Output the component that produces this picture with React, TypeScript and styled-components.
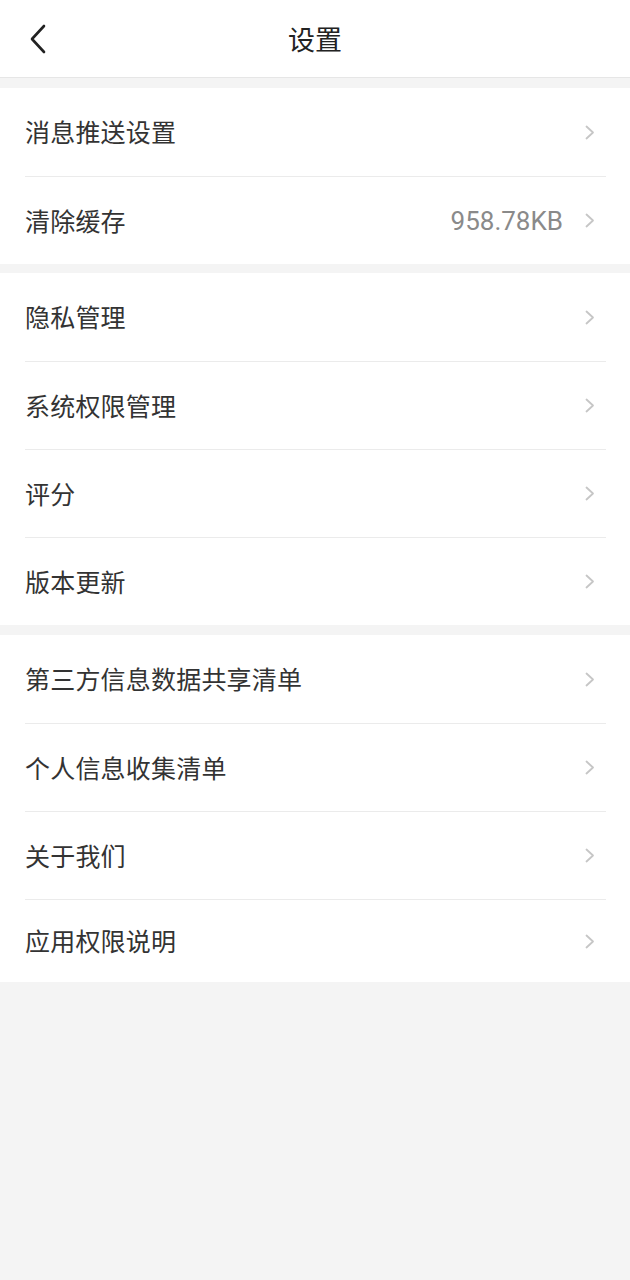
import React from "react";
import styled, { createGlobalStyle } from "styled-components";

const GlobalStyle = createGlobalStyle`
  html, body {
    margin: 0;
    padding: 0;
    background: #f4f4f4;
  }
  body {
    font-family: "Roboto", "Noto Sans CJK SC", sans-serif;
    -webkit-font-smoothing: antialiased;
  }
`;

const Page = styled.div`
  width: 630px;
  min-height: 1280px;
  background: #f4f4f4;
  display: flex;
  flex-direction: column;
`;

const Header = styled.header`
  height: 77px;
  background: #ffffff;
  border-bottom: 1px solid #e6e6e6;
  display: grid;
  grid-template-columns: 80px 1fr 80px;
  align-items: center;
  margin-bottom: 10px;
`;

const BackButton = styled.button`
  border: none;
  background: none;
  padding: 0 0 0 29px;
  height: 77px;
  display: flex;
  align-items: center;
  cursor: pointer;
`;

const Title = styled.h1`
  margin: 0;
  text-align: center;
  font-size: 27px;
  font-weight: 400;
  color: #222222;
  line-height: 1;
  padding-top: 5px;
`;

const Section = styled.section<{ $gap?: number }>`
  background: #ffffff;
  padding: 0 24px 0 25px;
  margin-bottom: ${(p) => p.$gap ?? 9}px;
  display: flex;
  flex-direction: column;
`;

const Item = styled.div<{ $height?: number }>`
  box-sizing: border-box;
  height: ${(p) => p.$height ?? 88}px;
  display: flex;
  align-items: center;
  border-top: 1px solid #ebebeb;
  &:first-child {
    border-top: none;
  }
`;

const Label = styled.span`
  flex: 1;
  font-size: 25px;
  color: #333333;
  line-height: 1;
  letter-spacing: 0.2px;
  padding-top: 3px;
`;

const Value = styled.span`
  font-size: 26px;
  color: #8a8a8a;
  margin-right: 21px;
  line-height: 1;
  padding-top: 1px;
`;

const ChevronWrap = styled.span`
  width: 12px;
  display: flex;
  justify-content: center;
  margin-right: 10px;
`;

const Chevron = () => (
  <ChevronWrap>
    <svg width="10" height="15" viewBox="0 0 10 15" fill="none">
      <path d="M1.5 1.5 L8 7.5 L1.5 13.5" stroke="#c6c6c6" strokeWidth="1.8" strokeLinecap="round" strokeLinejoin="round" />
    </svg>
  </ChevronWrap>
);

type Row = { label: string; value?: string; height?: number };

const sections: { gap: number; rows: Row[] }[] = [
  { gap: 9, rows: [{ label: "消息推送设置" }, { label: "清除缓存", value: "958.78KB" }] },
  {
    gap: 10,
    rows: [{ label: "隐私管理" }, { label: "系统权限管理" }, { label: "评分" }, { label: "版本更新" }],
  },
  {
    gap: 0,
    rows: [
      { label: "第三方信息数据共享清单" },
      { label: "个人信息收集清单" },
      { label: "关于我们" },
      { label: "应用权限说明", height: 83 },
    ],
  },
];

export default function App() {
  return (
    <>
      <GlobalStyle />
      <Page>
        <Header>
          <BackButton aria-label="返回">
            <svg width="18" height="30" viewBox="0 0 18 30" fill="none">
              <path d="M15 2 L3 15 L15 28" stroke="#222" strokeWidth="2.6" strokeLinecap="round" strokeLinejoin="round" />
            </svg>
          </BackButton>
          <Title>设置</Title>
          <span />
        </Header>
        {sections.map((s, i) => (
          <Section key={i} $gap={s.gap}>
            {s.rows.map((r) => (
              <Item key={r.label} $height={r.height}>
                <Label>{r.label}</Label>
                {r.value && <Value>{r.value}</Value>}
                <Chevron />
              </Item>
            ))}
          </Section>
        ))}
      </Page>
    </>
  );
}
